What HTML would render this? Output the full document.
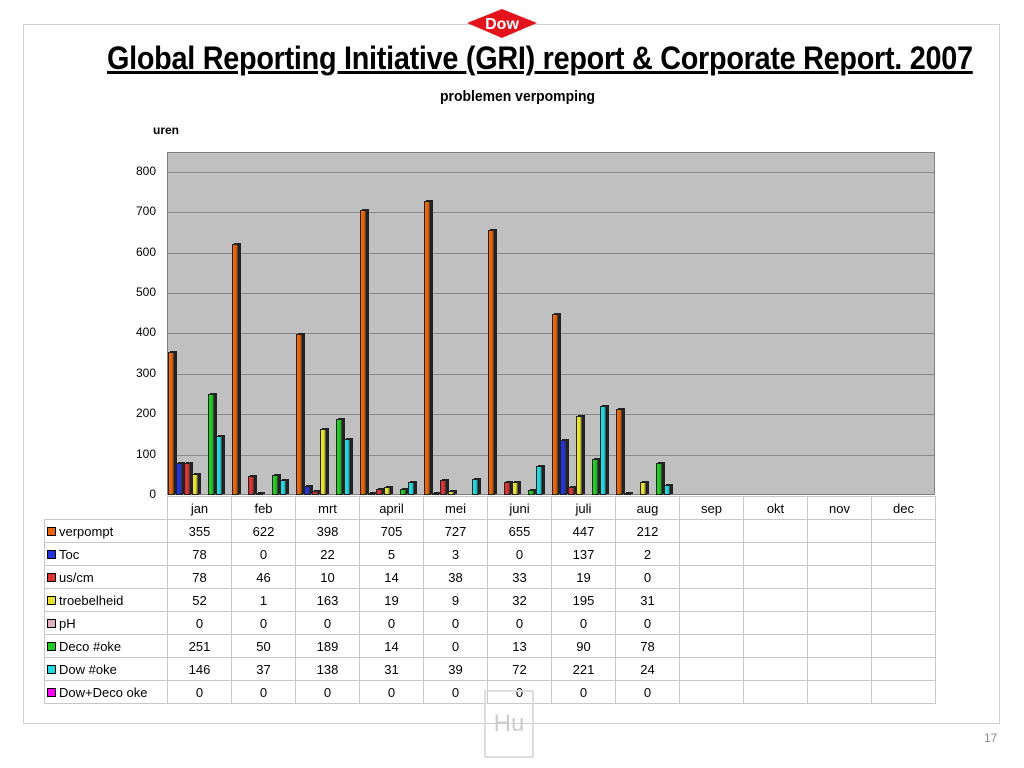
<!DOCTYPE html>
<html><head><meta charset="utf-8"><style>
body{margin:0;width:1024px;height:768px;background:#fff;position:relative;overflow:hidden;font-family:"Liberation Sans",sans-serif}
.a{position:absolute}
#frame{left:23px;top:24px;width:977px;height:700px;border:1px solid #d0d0d0;box-sizing:border-box}
h1{position:absolute;left:107px;top:40px;margin:0;font-size:32px;font-weight:bold;text-decoration:underline;letter-spacing:-0.3px;white-space:nowrap;transform:scaleX(0.9);transform-origin:0 0}
#plot{left:167px;top:152px;width:768px;height:343px;background:#c0c0c0;border:1px solid #808080;box-sizing:border-box}
.g{position:absolute;left:0;width:100%;height:1px;background:#888}
.yl{position:absolute;width:40px;text-align:right;font-size:12px}
.bar{position:absolute;width:7px;border:1px solid #222;box-sizing:border-box;box-shadow:2px -1px 0 #222}
table{position:absolute;left:44px;top:496px;border-collapse:collapse;font-size:13px;table-layout:fixed;width:891px}
td{border:1px solid #c8c8c8;height:22px;padding:0;text-align:center;white-space:nowrap;overflow:hidden}
td.l{text-align:left;padding-left:2px}
.sw{display:inline-block;width:7px;height:7px;border:1px solid #000;margin-right:3px;vertical-align:0}
</style></head><body>
<div id="frame" class="a"></div>
<svg class="a" style="left:466px;top:8px" width="72" height="32"><polygon points="1,15 36,1 71,15 36,30" fill="#e4121b"/><text x="36" y="21" font-family="Liberation Sans" font-weight="bold" font-size="16" fill="#fff" text-anchor="middle">Dow</text><circle cx="52" cy="25" r="1.5" fill="#fff"/></svg>
<h1>Global Reporting Initiative (GRI) report &amp; Corporate Report. 2007</h1>
<div class="a" style="left:440px;top:88px;font-size:15px;font-weight:bold;transform:scaleX(0.93);transform-origin:0 0">problemen verpomping</div>
<div class="a" style="left:153px;top:123px;font-size:12px;font-weight:bold">uren</div>
<div id="plot" class="a"></div>
<div id="yl"></div>
<table id="t"></table>
<div class="a" style="left:484px;top:690px;width:50px;height:68px;border:2px solid #ddd;box-sizing:border-box;color:#ccc;font-size:24px;text-align:center;padding-top:18px">Hu</div>
<div class="a" style="left:984px;top:731px;font-size:12px;color:#888">17</div>
<script>
var plot=document.getElementById('plot');
for(var v=100;v<=800;v+=100){var d=document.createElement('div');d.className='g';d.style.top=(343-v*0.404-1)+'px';plot.appendChild(d);}
var yl='';for(var v=0;v<=800;v+=100){yl+='<div class="yl" style="left:116px;top:'+(487-v*0.404)+'px">'+v+'</div>';}
document.getElementById('yl').innerHTML=yl;
var S=[['verpompt','#e8660a',[355,622,398,705,727,655,447,212]],['Toc','#2233dd',[78,0,22,5,3,0,137,2]],['us/cm','#dd3333',[78,46,10,14,38,33,19,0]],['troebelheid','#e8e030',[52,1,163,19,9,32,195,31]],['pH','#e0b0c0',[0,0,0,0,0,0,0,0]],['Deco #oke','#22cc22',[251,50,189,14,0,13,90,78]],['Dow #oke','#22d8e0',[146,37,138,31,39,72,221,24]],['Dow+Deco oke','#ff00ff',[0,0,0,0,0,0,0,0]]];
S.forEach(function(s,i){s[2].forEach(function(v,m){if(!v)return;var h=Math.max(2,v*0.404);var b=document.createElement('div');b.className='bar';b.style.left=(m*64+i*8)+'px';b.style.top=(342-h)+'px';b.style.height=h+'px';b.style.background='linear-gradient(90deg,'+s[1]+' 60%,#333)';plot.appendChild(b);});});
var M=['jan','feb','mrt','april','mei','juni','juli','aug','sep','okt','nov','dec'];
var h='<colgroup><col style="width:123px">';for(var k=0;k<12;k++)h+='<col style="width:64px">';h+='</colgroup>';
h+='<tr><td class="l" style="border:none;border-right:1px solid #c8c8c8"></td>'+M.map(function(m){return '<td>'+m+'</td>'}).join('')+'</tr>';
S.forEach(function(s){h+='<tr><td class="l"><span class="sw" style="background:'+s[1]+'"></span>'+s[0]+'</td>';for(var m=0;m<12;m++)h+='<td>'+(m<8?s[2][m]:'')+'</td>';h+='</tr>';});
document.getElementById('t').innerHTML=h;
</script>
</body></html>
